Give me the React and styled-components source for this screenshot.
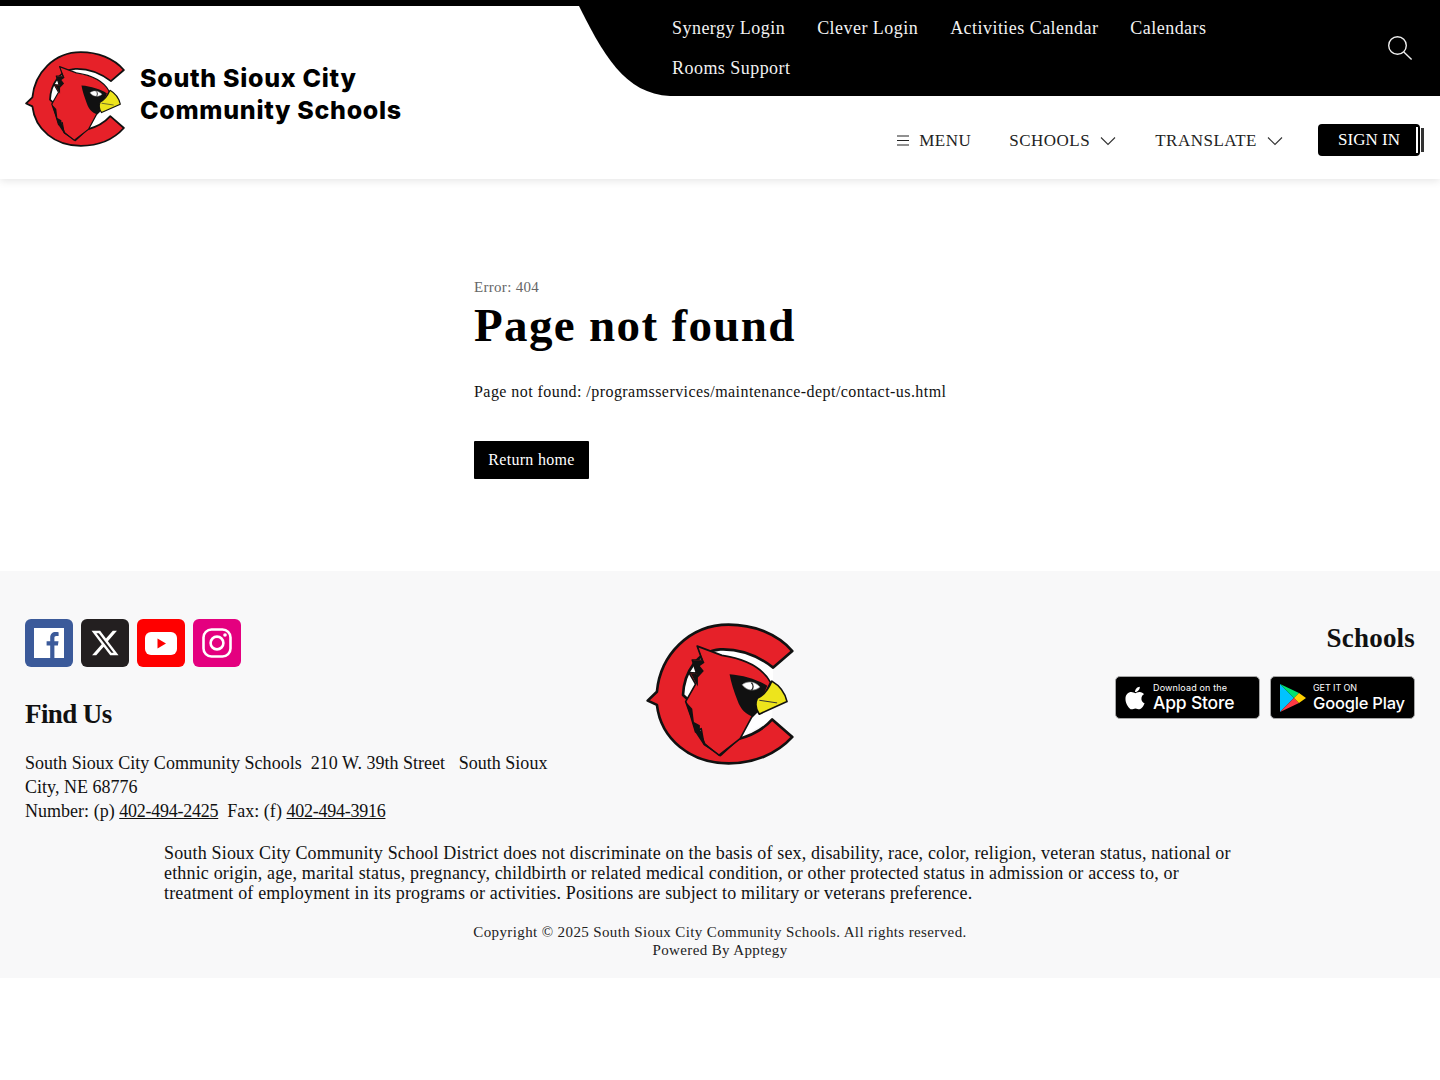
import React from "react";
import styled, { createGlobalStyle } from "styled-components";
import { FaApple, FaXTwitter } from "react-icons/fa6";

const Global = createGlobalStyle`
  html, body { margin: 0; padding: 0; background: #fff; }
  body { font-family: "Liberation Serif", serif; color: #111; }
  a { color: inherit; }
`;

const Page = styled.div`
  width: 1440px;
  min-height: 1080px;
  background: #fff;
`;

const Header = styled.header`
  height: 173px;
  border-top: 6px solid #000;
  display: flex;
  justify-content: space-between;
  box-shadow: 0 2px 8px rgba(0, 0, 0, 0.1);
`;

const Brand = styled.div`
  display: flex;
  align-items: center;
  gap: 15px;
  padding: 13px 0 0 25px;
`;

const BrandName = styled.div`
  font-family: Inter, sans-serif;
  font-weight: 800;
  font-size: 25px;
  line-height: 32px;
  letter-spacing: 0.7px;
  color: #000;
  margin-bottom: 10px;
`;

const HeaderRight = styled.div`
  width: 864px;
  margin-top: -6px;
  display: flex;
  flex-direction: column;
`;

const TopPanel = styled.div`
  height: 96px;
  background: #000;
  clip-path: path("M0 0 H864 V96 H94 C49 94 27 55 0 0 Z");
  display: flex;
  justify-content: space-between;
  padding: 8px 25px 0 96px;
  box-sizing: border-box;
`;

const TopLinks = styled.div`
  display: flex;
  flex-wrap: wrap;
  column-gap: 32px;
  width: 600px;
  align-content: flex-start;
`;

const TopLink = styled.a`
  font-size: 18px;
  line-height: 40px;
  letter-spacing: 0.46px;
  color: #f2f2f2;
  text-decoration: none;
`;

const SearchBtn = styled.button`
  border: 0;
  padding: 0;
  background: none;
  height: 26px;
  margin-top: 27px;
  margin-right: 2px;
  line-height: 0;
`;

const BottomRow = styled.nav`
  display: flex;
  align-items: center;
  justify-content: flex-end;
  padding: 28px 16px 0 0;
`;

const NavItem = styled.span`
  display: flex;
  align-items: center;
  gap: 10px;
  margin-top: 1px;
  margin-right: ${(p) => p.$right}px;
  font-size: 17px;
  letter-spacing: 0.5px;
  color: #222;
`;

const SignInWrap = styled.div`
  display: flex;
  align-items: center;
  width: 106px;
`;

const SignIn = styled.a`
  width: 102px;
  height: 32px;
  box-sizing: border-box;
  background: #000;
  border-radius: 4px;
  color: #fff;
  font-size: 17px;
  display: flex;
  align-items: center;
  justify-content: center;
  position: relative;
  &::before {
    content: "";
    position: absolute;
    right: 2px;
    top: 3px;
    width: 2px;
    height: 26px;
    background: #fff;
  }
  &::after {
    content: "";
    position: absolute;
    left: 103px;
    top: 4px;
    width: 3px;
    height: 24px;
    background: #333;
  }
`;

const Main = styled.main`
  height: 392px;
  box-sizing: border-box;
  padding: 100px 0 0 474px;
`;

const ErrorCode = styled.div`
  font-size: 15px;
  line-height: 17px;
  color: #666;
  letter-spacing: 0.3px;
`;

const Title = styled.h1`
  margin: 2px 0 0;
  font-size: 47px;
  line-height: 54px;
  font-weight: 700;
  letter-spacing: 1.35px;
  color: #000;
`;

const Message = styled.p`
  margin: 30px 0 0;
  font-size: 16px;
  line-height: 20px;
  letter-spacing: 0.44px;
  color: #111;
`;

const ReturnBtn = styled.a`
  display: inline-flex;
  align-items: center;
  justify-content: center;
  margin-top: 39px;
  width: 115px;
  height: 38px;
  background: #000;
  color: #fff;
  font-size: 16px;
  letter-spacing: 0.3px;
  border-radius: 1px;
`;

const Footer = styled.footer`
  background: #f8f8f9;
  height: 407px;
  box-sizing: border-box;
  padding: 48px 25px 0;
`;

const FooterTop = styled.div`
  display: grid;
  grid-template-columns: 530px 1fr 530px;
  height: 224px;
`;

const Socials = styled.div`
  display: flex;
  gap: 8px;
`;

const Social = styled.a`
  width: 48px;
  height: 48px;
  border-radius: 6px;
  background: ${(p) => p.$bg};
  color: #fff;
  display: flex;
  align-items: center;
  justify-content: center;
`;

const FooterHeading = styled.h2`
  margin: ${(p) => p.$margin};
  font-size: 27px;
  line-height: 32px;
  font-weight: 700;
  letter-spacing: ${(p) => p.$spacing}px;
  color: #111;
`;

const Address = styled.div`
  margin-top: 21px;
  font-size: 18px;
  line-height: 24px;
  letter-spacing: 0.02px;
  color: #111;
`;

const Phone = styled.a`
  letter-spacing: -0.25px;
`;

const LogoCol = styled.div`
  display: flex;
  justify-content: center;
  align-items: flex-start;
  padding-top: 4px;
`;

const RightCol = styled.div`
  display: flex;
  flex-direction: column;
  align-items: flex-end;
`;

const Badges = styled.div`
  display: flex;
  gap: 10px;
  margin-top: 22px;
`;

const Badge = styled.a`
  width: 145px;
  height: 43px;
  box-sizing: border-box;
  background: #000;
  border: 1px solid #a6a6a6;
  border-radius: 5px;
  display: flex;
  align-items: center;
  color: #fff;
  font-family: Inter, sans-serif;
  padding-left: ${(p) => p.$left}px;
  gap: ${(p) => p.$gap}px;
`;

const BadgeText = styled.div`
  display: flex;
  flex-direction: column;
`;

const BadgeSmall = styled.span`
  font-size: 9px;
  line-height: 10px;
  letter-spacing: ${(p) => p.$spacing}px;
  white-space: nowrap;
`;

const BadgeBig = styled.span`
  font-size: ${(p) => p.$size}px;
  line-height: 20px;
  font-weight: 500;
  letter-spacing: -0.2px;
  white-space: nowrap;
`;

const Notice = styled.p`
  margin: 0 0 0 139px;
  width: 1080px;
  font-size: 18px;
  line-height: 20px;
  letter-spacing: 0.17px;
  color: #111;
`;

const Copyright = styled.div`
  margin-top: 20px;
  text-align: center;
  font-size: 15px;
  line-height: 18px;
  letter-spacing: 0.38px;
  color: #222;
`;

const CardinalLogo = ({ width, height }) => (
  <svg width={width} height={height} viewBox="15 20 448 430" aria-label="Cardinal logo">
    {/* white disc behind the bird so the gaps stay white on the grey footer */}
    <path d="M400 155 C350 110 290 98 240 100 C170 105 125 170 125 240 L240 420 L292 372 L397 312 Z" fill="#fff" />
    {/* C ring */}
    <path
      d="M458 105 C412 52 340 25 265 25 C145 25 58 118 48 228 L20 255 L48 268 C60 372 150 445 265 445 C340 445 410 418 458 365 L397 312 C368 345 332 362 292 372 L240 420 C195 385 150 320 140 250 L127 238 C130 170 170 105 240 100 C295 98 352 118 400 155 Z"
      fill="#e62129"
      stroke="#111"
      strokeWidth="8"
      strokeLinejoin="round"
    />
    {/* body */}
    <path
      d="M170 90 L245 118 C310 128 365 150 392 200 L350 290 L335 305 L300 370 L236 420 L190 385 L182 340 L165 350 L150 300 L135 258 L165 205 L145 170 L168 172 L155 132 L185 132 Z"
      fill="#e62129"
      stroke="#111"
      strokeWidth="5"
      strokeLinejoin="round"
    />
    {/* feather shadows */}
    <path d="M170 92 L192 140 L178 150 L190 165 L172 185 L172 212 L150 172 L170 175 L156 134 L185 134 Z" fill="#111" />
    <path d="M135 258 L155 280 L160 320 L178 330 L178 345 L195 385 L236 420 L190 390 L165 352 L150 302 Z" fill="#111" />
    {/* black mask */}
    <path
      d="M268 175 C310 178 355 192 382 210 L350 290 L338 303 C320 300 300 280 292 255 C282 228 272 200 268 175 Z"
      fill="#111"
    />
    {/* eye */}
    <path d="M306 207 C322 193 348 198 360 214 C344 228 320 226 306 207 Z" fill="#fff" stroke="#888" strokeWidth="2" />
    <path d="M334 201 C342 208 340 218 334 224" fill="none" stroke="#222" strokeWidth="4" />
    {/* beak */}
    <path
      d="M396 196 C420 210 436 232 442 258 L358 296 C346 280 346 262 352 248 C370 240 385 222 396 196 Z"
      fill="#ede41c"
      stroke="#111"
      strokeWidth="5"
      strokeLinejoin="round"
    />
    <path d="M358 254 L412 262" fill="none" stroke="#333" strokeWidth="3" />
  </svg>
);

const Chevron = () => (
  <svg width="16" height="10" viewBox="0 0 16 10" fill="none" stroke="#333" strokeWidth="1.1">
    <path d="M1 1.5 L8 8.5 L15 1.5" />
  </svg>
);

const Hamburger = () => (
  <svg width="12" height="11" viewBox="0 0 12 11" stroke="#222" strokeWidth="1.1">
    <path d="M0 1 H12 M0 5.5 H12 M0 10 H12" />
  </svg>
);

const SearchIcon = () => (
  <svg width="26" height="26" viewBox="0 0 26 26" fill="none" stroke="#eee" strokeWidth="1.4">
    <circle cx="10.5" cy="10.5" r="8.8" />
    <path d="M16.8 17 L24.6 24.6" />
  </svg>
);

const FacebookIcon = () => (
  <svg width="30" height="30" viewBox="0 0 30 30">
    <rect width="30" height="30" fill="#fff" />
    <path
      d="M16.2 30 V17.6 H12.6 V13.2 H16.2 V9.6 C16.2 6 18.4 4 21.6 4 C23 4 24.2 4.1 24.6 4.2 V7.9 H22.4 C20.7 7.9 20.4 8.8 20.4 10 V13.2 H24.5 L23.9 17.6 H20.4 V30 Z"
      fill="#3b5a9a"
    />
  </svg>
);

const YoutubeIcon = () => (
  <svg width="32" height="23" viewBox="0 0 32 23">
    <rect width="32" height="23" rx="6" fill="#fff" />
    <path d="M12.5 6.5 L21 11.5 L12.5 16.5 Z" fill="#f00" />
  </svg>
);

const InstagramIcon = () => (
  <svg width="30" height="30" viewBox="0 0 30 30" fill="none" stroke="#fff" strokeWidth="2.6">
    <rect x="1.5" y="1.5" width="27" height="27" rx="8" />
    <circle cx="15" cy="15" r="6.4" />
    <circle cx="23" cy="7" r="1.8" fill="#fff" stroke="none" />
  </svg>
);

const PlayIcon = () => (
  <svg width="28" height="30" viewBox="0 0 28 30">
    <path d="M1 1 L1 29 L15 15 Z" fill="#00c3ff" />
    <path d="M1 1 L15 15 L20 10 Z" fill="#00e36f" />
    <path d="M1 29 L15 15 L20 20 Z" fill="#ff3a44" />
    <path d="M20 10 L27 15 L20 20 L15 15 Z" fill="#ffd000" />
  </svg>
);

export default function App() {
  return (
    <Page>
      <Global />
      <Header>
        <Brand>
          <CardinalLogo width={100} height={96} />
          <BrandName>
            South Sioux City
            <br />
            Community Schools
          </BrandName>
        </Brand>
        <HeaderRight>
          <TopPanel>
            <TopLinks>
              <TopLink>Synergy Login</TopLink>
              <TopLink>Clever Login</TopLink>
              <TopLink>Activities Calendar</TopLink>
              <TopLink>Calendars</TopLink>
              <TopLink>Rooms Support</TopLink>
            </TopLinks>
            <SearchBtn aria-label="Search">
              <SearchIcon />
            </SearchBtn>
          </TopPanel>
          <BottomRow>
            <NavItem $right={38}>
              <Hamburger />
              MENU
            </NavItem>
            <NavItem $right={39}>
              SCHOOLS
              <Chevron />
            </NavItem>
            <NavItem $right={35}>
              TRANSLATE
              <Chevron />
            </NavItem>
            <SignInWrap>
              <SignIn>SIGN IN</SignIn>
            </SignInWrap>
          </BottomRow>
        </HeaderRight>
      </Header>

      <Main>
        <ErrorCode>Error: 404</ErrorCode>
        <Title>Page not found</Title>
        <Message>Page not found: /programsservices/maintenance-dept/contact-us.html</Message>
        <ReturnBtn>Return home</ReturnBtn>
      </Main>

      <Footer>
        <FooterTop>
          <div>
            <Socials>
              <Social $bg="#3b5a9a">
                <FacebookIcon />
              </Social>
              <Social $bg="#231f20">
                <FaXTwitter size={30} />
              </Social>
              <Social $bg="#ff0000">
                <YoutubeIcon />
              </Social>
              <Social $bg="#e4007f">
                <InstagramIcon />
              </Social>
            </Socials>
            <FooterHeading $margin="31px 0 0" $spacing={-0.6}>
              Find Us
            </FooterHeading>
            <Address>
              South Sioux City Community Schools&nbsp; 210 W. 39th Street &nbsp; South Sioux City, NE 68776
              <br />
              Number: (p) <Phone href="#">402-494-2425</Phone>&nbsp; Fax: (f) <Phone href="#">402-494-3916</Phone>
            </Address>
          </div>
          <LogoCol>
            <CardinalLogo width={148} height={142} />
          </LogoCol>
          <RightCol>
            <FooterHeading $margin="3px 0 0" $spacing={0.2}>
              Schools
            </FooterHeading>
            <Badges>
              <Badge $left={6} $gap={5}>
                <FaApple size={26} />
                <BadgeText>
                  <BadgeSmall $spacing={0.15}>Download on the</BadgeSmall>
                  <BadgeBig $size={17.5}>App Store</BadgeBig>
                </BadgeText>
              </Badge>
              <Badge $left={8} $gap={6}>
                <PlayIcon />
                <BadgeText>
                  <BadgeSmall $spacing={-0.1}>GET IT ON</BadgeSmall>
                  <BadgeBig $size={16.5}>Google Play</BadgeBig>
                </BadgeText>
              </Badge>
            </Badges>
          </RightCol>
        </FooterTop>
        <Notice>
          South Sioux City Community School District does not discriminate on the basis of sex, disability, race, color,
          religion, veteran status, national or ethnic origin, age, marital status, pregnancy, childbirth or related
          medical condition, or other protected status in admission or access to, or treatment of employment in its
          programs or activities. Positions are subject to military or veterans preference.
        </Notice>
        <Copyright>
          Copyright © 2025 South Sioux City Community Schools. All rights reserved.
          <br />
          Powered By Apptegy
        </Copyright>
      </Footer>
    </Page>
  );
}
